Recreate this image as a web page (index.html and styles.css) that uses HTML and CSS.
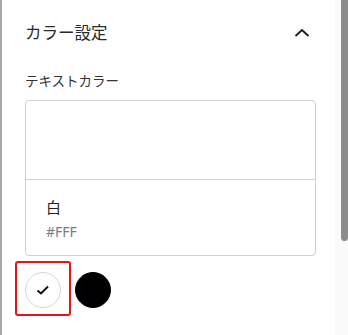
FILE: index.html
```html
<!DOCTYPE html>
<html lang="ja">
<head>
<meta charset="utf-8">
<link rel="stylesheet" href="styles.css">
</head>
<body>
<div class="page">
  <div class="panel">
    <div class="section-head">
      <h2 class="section-title">カラー設定</h2>
      <svg class="chevron" width="16" height="10" viewBox="0 0 16 10"><path d="M1.5 8 L8 2 L14.5 8" fill="none" stroke="#222" stroke-width="2"/></svg>
    </div>
    <div class="field-label">テキストカラー</div>
    <div class="color-box">
      <div class="preview"></div>
      <div class="color-info">
        <div class="color-name">白</div>
        <div class="color-code">#FFF</div>
      </div>
    </div>
    <div class="swatches">
      <button class="swatch swatch-white selected">
        <svg width="14" height="12" viewBox="0 0 14 12"><path d="M1.5 6.5 L5 9.5 L12 2.5" fill="none" stroke="#111" stroke-width="2"/></svg>
      </button>
      <button class="swatch swatch-black"></button>
    </div>
  </div>
  <div class="scroll-track"><div class="scroll-thumb"></div></div>
</div>
</body>
</html>
```
FILE: styles.css
```css
html, body {
  margin: 0;
  padding: 0;
  background: #fff;
}
.page {
  display: flex;
  width: 348px;
  height: 335px;
  overflow: hidden;
  font-family: "Noto Sans CJK JP", "Noto Sans", sans-serif;
  color: #222;
}
.panel {
  width: 291px;
  flex: none;
  border-left: 2px solid #a8a8a8;
  padding: 20px 19px 0 23px;
  box-sizing: content-box;
}
.section-head {
  display: flex;
  align-items: center;
  justify-content: space-between;
  height: 25px;
}
.section-title {
  margin: 0;
  font-size: 16.5px;
  font-weight: 400;
  line-height: 25px;
  color: #2a2a2a;
}
.chevron {
  margin-right: 6px;
  margin-top: 0;
}
.field-label {
  margin-top: 25px;
  font-size: 13.5px;
  line-height: 20px;
  color: #333;
}
.color-box {
  margin-top: 10px;
  width: 289px;
  border: 1px solid #cfcfcf;
  border-radius: 4px;
}
.preview {
  height: 78px;
  border-bottom: 1px solid #cfcfcf;
}
.color-info {
  padding: 17px 20px 14px;
}
.color-name {
  font-size: 15px;
  line-height: 20px;
  color: #222;
}
.color-code {
  margin-top: 6px;
  font-size: 14px;
  line-height: 18px;
  color: #7a7a7a;
  font-family: "Noto Sans", sans-serif;
}
.swatches {
  display: flex;
  gap: 14px;
  margin-top: 16px;
}
.swatch {
  position: relative;
  width: 36px;
  height: 36px;
  border-radius: 50%;
  padding: 0;
  display: flex;
  align-items: center;
  justify-content: center;
  cursor: pointer;
}
.swatch-white {
  background: #fff;
  border: 1px solid #d6d6d6;
}
.swatch-black {
  background: #000;
  border: 1px solid #000;
}
.swatch.selected::before {
  content: "";
  position: absolute;
  left: -11px;
  right: -11px;
  top: -12px;
  bottom: -9px;
  border: 2px solid #e41515;
  border-radius: 3px;
}
.scroll-track {
  flex: 1;
  background: #fafafa;
  display: flex;
  justify-content: flex-end;
}
.scroll-thumb {
  width: 7px;
  height: 241px;
  background: #8c8c8c;
  border-radius: 0 0 4px 4px;
}
```
